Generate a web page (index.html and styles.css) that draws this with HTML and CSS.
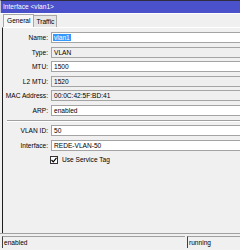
FILE: index.html
```html
<!DOCTYPE html>
<html lang="en">
<head>
    <meta charset="UTF-8">
    <meta name="viewport" content="width=device-width, initial-scale=1.0">
    <title>Interface &lt;vlan1&gt;</title>
    <link rel="stylesheet" href="styles.css">
</head>
<body>
    <div class="window">
        <div class="titlebar">Interface &lt;vlan1&gt;</div>
        <div class="tabs">
            <div class="tab active">General</div>
            <div class="tab">Traffic</div>
        </div>
        <div class="panel">
            <div class="form">
                <label>Name:</label>
                <div class="field"><span class="sel">vlan1</span></div>
                <label>Type:</label>
                <div class="field ro">VLAN</div>
                <label>MTU:</label>
                <div class="field">1500</div>
                <label>L2 MTU:</label>
                <div class="field ro">1520</div>
                <label>MAC Address:</label>
                <div class="field ro">00:0C:42:5F:BD:41</div>
                <label>ARP:</label>
                <div class="field">enabled</div>
            </div>
            <div class="separator"></div>
            <div class="form">
                <label>VLAN ID:</label>
                <div class="field">50</div>
                <label>Interface:</label>
                <div class="field">REDE-VLAN-50</div>
                <span></span>
                <div class="check">
                    <span class="box">
                        <svg width="6" height="6" viewBox="0 0 6 6"><path d="M0.5 3 L2.3 4.8 L5.5 0.8" fill="none" stroke="#000" stroke-width="1.2"/></svg>
                    </span>
                    <span>Use Service Tag</span>
                </div>
            </div>
        </div>
        <div class="statusbar">
            <div class="status first">enabled</div>
            <div class="status">running</div>
        </div>
    </div>
</body>
</html>
```

FILE: styles.css
```css
body {
    margin: 0;
    width: 240px;
    height: 250px;
    overflow: hidden;
    background-color: #f0f0f0;
    font-family: "Liberation Sans", Arial, sans-serif;
    font-size: 6.6px;
    color: #000;
}
.window {
    width: 240px;
    height: 250px;
    display: flex;
    flex-direction: column;
}
.titlebar {
    height: 12px;
    line-height: 12px;
    border-top: 1px solid #2e2e40;
    padding-left: 2px;
    background-color: #4b50cb;
    color: #fff;
    border-left: 1px solid #c8c8d8;
}
.tabs {
    height: 13px;
    border-top: 1px solid #fff;
    display: flex;
    align-items: flex-end;
    padding-left: 3px;
}
.tab {
    height: 11px;
    line-height: 11px;
    padding: 0 2px;
    border: 1px solid #a8a8a8;
    border-bottom: none;
    background-color: #e6e6e6;
}
.tab.active {
    height: 12px;
    background-color: #f7f7f7;
    padding: 0 3px;
}
.tab + .tab {
    border-left: none;
}
.panel {
    height: 204px;
    margin-left: 2px;
    border-left: 1px solid #1e1e1e;
    border-top: 1px solid #fff;
    padding-top: 4px;
}
.form {
    display: grid;
    grid-template-columns: 45px 1fr;
    column-gap: 3px;
    row-gap: 3.6px;
}
.form label {
    text-align: right;
    line-height: 11px;
    white-space: nowrap;
}
.field {
    height: 9px;
    line-height: 9px;
    border: 1px solid #a4a4a4;
    border-right: none;
    background-color: #fff;
    padding-left: 2px;
}
.field.ro {
    background-color: #efefef;
}
.sel {
    background-color: #3399ff;
    color: #fff;
    padding: 0 1px;
    margin-left: -1px;
}
.separator {
    height: 0;
    margin: 4px 0 3px 4px;
    border-top: 1px solid #a0a0a0;
    border-bottom: 1px solid #fff;
}
.check {
    display: flex;
    align-items: center;
    gap: 4px;
    height: 11px;
    margin-left: -1px;
}
.box {
    width: 6px;
    height: 6px;
    border: 1px solid #333;
    background-color: #fff;
    display: flex;
}
.statusbar {
    display: flex;
    height: 14px;
    border-top: 1px solid #a0a0a0;
    padding: 2px 0 0 2px;
    gap: 2px;
}
.status {
    height: 11px;
    line-height: 11px;
    border-top: 1px solid #a0a0a0;
    border-left: 1px solid #404040;
    padding-left: 1px;
}
.status.first {
    width: 181px;
}
.status + .status {
    flex: 1;
}
```
